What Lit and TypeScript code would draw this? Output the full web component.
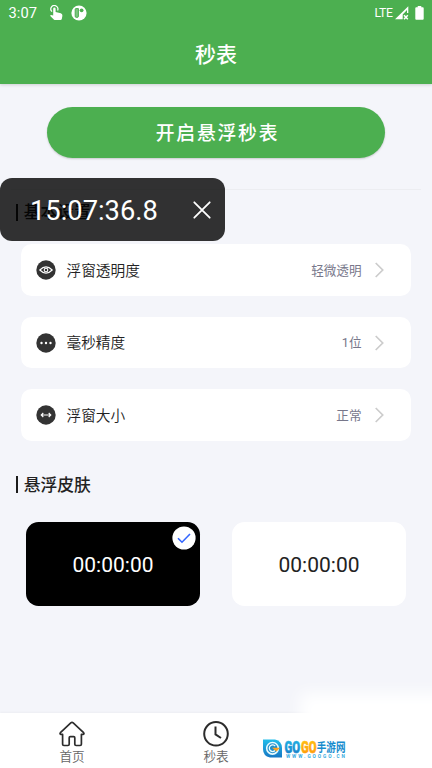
import { LitElement, html, svg, css } from "lit";
import { customElement, property } from "lit/decorators.js";

const rowIcons = {
  eye: svg`<path d="M3.8 10Q10 3.8 16.2 10Q10 16.2 3.8 10Z"/><circle cx="10" cy="10" r="1.8"/>`,
  dots: svg`<g fill="#fff" stroke="none"><circle cx="5.5" cy="10" r="1.2"/><circle cx="10" cy="10" r="1.2"/><circle cx="14.5" cy="10" r="1.2"/></g>`,
  resize: svg`<path d="M5.5 10H14.5M7.3 8L5.2 10L7.3 12M12.7 8L14.8 10L12.7 12"/>`,
};

@customElement("setting-row")
class SettingRow extends LitElement {
  @property() label = "";
  @property() value = "";
  @property() icon: keyof typeof rowIcons = "eye";

  static styles = css`
    :host {
      display: flex;
      align-items: center;
      height: 51.6px;
      box-sizing: border-box;
      padding: 0 25.5px 0 15.3px;
      border-radius: 10.5px;
      background: #fff;
    }
    .icon { width: 20px; height: 20px; margin-right: 10.2px; flex: none; }
    .label { flex: 1; font-size: 14.7px; font-weight: 350; color: #222; line-height: 20px; padding-top: 1.6px; }
    .value { font-size: 12.6px; font-weight: 400; color: #77778a; line-height: 20px; padding-top: 1.4px; }
    .arrow { width: 12px; height: 18px; margin-left: 12px; }
  `;

  render() {
    return html`
      <svg class="icon" viewBox="0 0 20 20" fill="none" stroke="#fff" stroke-width="1.1">
        <circle cx="10" cy="10" r="9.7" fill="#333" stroke="none" />
        ${rowIcons[this.icon]}
      </svg>
      <span class="label">${this.label}</span>
      <span class="value">${this.value}</span>
      <svg class="arrow" viewBox="0 0 12 18" fill="none" stroke="#ccc" stroke-width="1.7">
        <path d="M1.7 2L8.7 9L1.7 16" />
      </svg>
    `;
  }
}

@customElement("app-root")
class AppRoot extends LitElement {
  static styles = css`
    :host {
      display: flex;
      flex-direction: column;
      position: relative;
      width: 432px;
      height: 768px;
      overflow: hidden;
      background: #f4f5fa;
      font-family: Roboto, "Noto Sans CJK SC", sans-serif;
      color: #222;
    }
    svg { display: block; }
    header {
      flex: none;
      height: 84px;
      background: #4caf50;
      color: #fff;
      box-shadow: 0 1px 3px rgba(0, 0, 0, 0.16);
    }
    .status {
      display: flex;
      align-items: center;
      height: 26px;
      padding: 0 8px 0 8.5px;
    }
    .clock { font-size: 14.7px; letter-spacing: 0.1px; width: 40px; }
    .touch { width: 15px; height: 16px; }
    .badge { width: 16px; height: 16px; margin-left: 7.5px; }
    .lte { margin-left: auto; font-size: 12.2px; letter-spacing: -0.4px; }
    .signal { width: 14px; height: 14px; margin-left: 2.5px; }
    .battery { width: 9px; height: 14px; margin-left: 6px; }
    h1 {
      margin: 0;
      height: 58px;
      line-height: 59px;
      text-align: center;
      font-size: 21px;
      font-weight: 500;
    }
    .start {
      flex: none;
      display: block;
      width: 338px;
      height: 50.5px;
      margin: 23.4px auto 0;
      padding: 2px 0 0 3px;
      border: 0;
      border-radius: 26px;
      background: #4caf50;
      color: #fff;
      font: 500 18.8px/50px Roboto, "Noto Sans CJK SC", sans-serif;
      letter-spacing: 1.8px;
      box-shadow: 0 1px 2px rgba(0, 0, 0, 0.18);
    }
    .divider { flex: none; height: 1px; margin: 31.1px 11px 0; background: #ecedf1; }
    h2 {
      flex: none;
      display: flex;
      align-items: center;
      height: 24px;
      margin: 0 0 0 15.7px;
      font-size: 16.8px;
      font-weight: 500;
      line-height: 24px;
    }
    h2::before { content: ""; width: 2px; height: 17px; margin-right: 6px; background: #1c1c1c; }
    .basic { margin-top: 10.5px; }
    .rows {
      flex: none;
      display: flex;
      flex-direction: column;
      gap: 21px;
      padding: 0 21px;
      margin-top: 19.7px;
    }
    .skin { margin-top: 31.8px; }
    .skins { flex: none; display: flex; gap: 32px; margin: 25.2px 26px 0; }
    .card {
      position: relative;
      flex: 1;
      height: 84px;
      border-radius: 12.5px;
      background: #fff;
      text-align: center;
      font-size: 21px;
      line-height: 87px;
    }
    .card.dark { background: #000; color: #fff; }
    .check { position: absolute; right: 4px; top: 4px; width: 24px; height: 24px; }
    nav {
      display: flex;
      height: 55px;
      margin-top: auto;
      background: #fff;
      box-shadow: 0 -1px 2px rgba(0, 0, 0, 0.03);
    }
    .tab {
      width: 144px;
      display: flex;
      flex-direction: column;
      align-items: center;
      padding-top: 7px;
      font-size: 12.6px;
      font-weight: 350;
      line-height: 18px;
      color: #666;
    }
    .tab svg { width: 28px; height: 28px; }
    .haze {
      position: absolute;
      left: 300px;
      top: 693px;
      width: 170px;
      height: 100px;
      background: #fff;
      filter: blur(8px);
    }
    .brand { position: absolute; left: 262px; top: 738px; width: 86px; height: 22px; overflow: visible; }
    .floating {
      position: absolute;
      left: 0;
      top: 178px;
      width: 225px;
      height: 63px;
      box-sizing: border-box;
      display: flex;
      align-items: center;
      justify-content: space-between;
      padding: 3px 13px 0 30px;
      border-radius: 12px;
      background: rgba(0, 0, 0, 0.8);
      color: #fff;
      font-size: 27.3px;
    }
    .close { width: 20px; height: 20px; margin-bottom: 3px; }
  `;

  render() {
    return html`
      <header>
        <div class="status">
          <span class="clock">3:07</span>
          <svg class="touch" viewBox="0 0 15 16" fill="#fff">
            <path d="M3 6.6A3.5 3.5 0 1 1 8.6 5.4" fill="none" stroke="#fff" stroke-width="1.2" />
            <path d="M4.2 3.7a1.2 1.2 0 0 1 2.4 0V6.9L11.8 8.3Q13.6 8.9 13.4 10.7L12.8 14Q12.5 15.1 11.4 15.1H6.3Q5.4 15.1 4.8 14.4L1 10.8L2 9.9L4.2 10.5Z" />
          </svg>
          <svg class="badge" viewBox="0 0 16 16">
            <circle cx="8" cy="8" r="7.6" fill="#fff" />
            <path d="M4.2 4.3Q4.2 3.6 4.9 3.6H7.4V11.2Q7.4 12.4 6.2 12.4H5.4Q4.2 12.4 4.2 11.2Z" fill="#7cc47f" stroke="#4caf50" stroke-width="1" />
            <circle cx="10.6" cy="5.3" r="1.9" fill="#4caf50" />
          </svg>
          <span class="lte">LTE</span>
          <svg class="signal" viewBox="0 0 14 14">
            <path d="M0 13.3L13.3 0.3V7H12V4L7.7 8.4V13.3Z" fill="#fff" />
            <path d="M9 9.2L12.8 13.2M12.8 9.2L9 13.2" stroke="#fff" stroke-width="1.5" />
          </svg>
          <svg class="battery" viewBox="0 0 9 14">
            <path d="M2.7 0H6.3V1.3H7.8Q8.7 1.3 8.7 2.2V12.8Q8.7 13.8 7.8 13.8H1.2Q0.3 13.8 0.3 12.8V2.2Q0.3 1.3 1.2 1.3H2.7Z" fill="#fff" />
          </svg>
        </div>
        <h1>秒表</h1>
      </header>
      <button class="start">开启悬浮秒表</button>
      <div class="divider"></div>
      <h2 class="basic">基本设置</h2>
      <div class="rows">
        <setting-row icon="eye" label="浮窗透明度" value="轻微透明"></setting-row>
        <setting-row icon="dots" label="毫秒精度" value="1位"></setting-row>
        <setting-row icon="resize" label="浮窗大小" value="正常"></setting-row>
      </div>
      <h2 class="skin">悬浮皮肤</h2>
      <div class="skins">
        <div class="card dark">
          00:00:00
          <svg class="check" viewBox="0 0 24 24" fill="none">
            <circle cx="12" cy="12" r="11.6" fill="#fff" />
            <path d="M6 12.2L10 16.2L18 8" stroke="#3366ff" stroke-width="1.6" />
          </svg>
        </div>
        <div class="card">00:00:00</div>
      </div>
      <nav>
        <div class="tab">
          <svg viewBox="0 0 28 28" fill="none" stroke="#2c2c2c" stroke-width="1.7" stroke-linejoin="round">
            <path d="M12.8 2.9Q14 1.8 15.2 2.9L25.6 12.7Q26.6 14.1 25.1 14.4H23.4V24.2Q23.4 25.5 22.1 25.5H18.1Q16.8 25.5 16.8 24.2V17.8Q16.8 16.7 15.7 16.7H12.3Q11.2 16.7 11.2 17.8V24.2Q11.2 25.5 9.9 25.5H5.9Q4.6 25.5 4.6 24.2V14.4H2.9Q1.4 14.1 2.4 12.7Z" />
          </svg>
          <span>首页</span>
        </div>
        <div class="tab">
          <svg viewBox="0 0 28 28" fill="none" stroke="#2c2c2c" stroke-width="2">
            <circle cx="14" cy="13.8" r="11.8" />
            <path d="M13.5 6.6V14.4L19 18" />
          </svg>
          <span>秒表</span>
        </div>
      </nav>
      <div class="haze"></div>
      <svg class="brand" viewBox="0 0 86 22">
        <defs>
          <linearGradient id="blue" x1="0" y1="0" x2="0" y2="1">
            <stop offset="0" stop-color="#22bdea" /><stop offset="1" stop-color="#1677c4" />
          </linearGradient>
          <linearGradient id="gold" x1="0" y1="0" x2="0" y2="1">
            <stop offset="0" stop-color="#ffc814" /><stop offset="1" stop-color="#ff9408" />
          </linearGradient>
        </defs>
        <path d="M1 1.5H13Q20 3 20 10V19.5H8Q1 18 1 11Z" fill="url(#blue)" />
        <circle cx="10.5" cy="10.3" r="5.8" fill="#218fca" stroke="#e9fbff" stroke-width="1.6" />
        <path d="M13.2 8.2A3.3 3.3 0 1 0 13 12.5" fill="none" stroke="#e9fbff" stroke-width="1.3" />
        <path d="M10 9.8H18L14.5 13.5Z" fill="#ffa321" />
        <g font-family="Roboto, sans-serif" font-weight="900" font-size="17" stroke-width="0.6">
          <text x="22.5" y="14.8" textLength="15.6" lengthAdjust="spacingAndGlyphs" fill="url(#blue)" stroke="url(#blue)">GO</text>
          <text x="38.9" y="14.8" textLength="15.6" lengthAdjust="spacingAndGlyphs" fill="url(#gold)" stroke="url(#gold)">GO</text>
        </g>
        <text x="54.8" y="14" font-family="Noto Sans CJK SC, sans-serif" font-weight="700" font-size="12.5" textLength="28.7" lengthAdjust="spacingAndGlyphs" fill="#178cce">手游网</text>
        <text x="24" y="19.8" font-family="Roboto, sans-serif" font-weight="700" font-size="4.8" textLength="59" fill="#35abe0">WWW.GOOGO.CN</text>
      </svg>
      <div class="floating">
        <span>15:07:36.8</span>
        <svg class="close" viewBox="0 0 20 20" stroke="#fff" stroke-width="1.8" stroke-linecap="round">
          <path d="M2.3 2.3L17.7 17.7M17.7 2.3L2.3 17.7" />
        </svg>
      </div>
    `;
  }
}
